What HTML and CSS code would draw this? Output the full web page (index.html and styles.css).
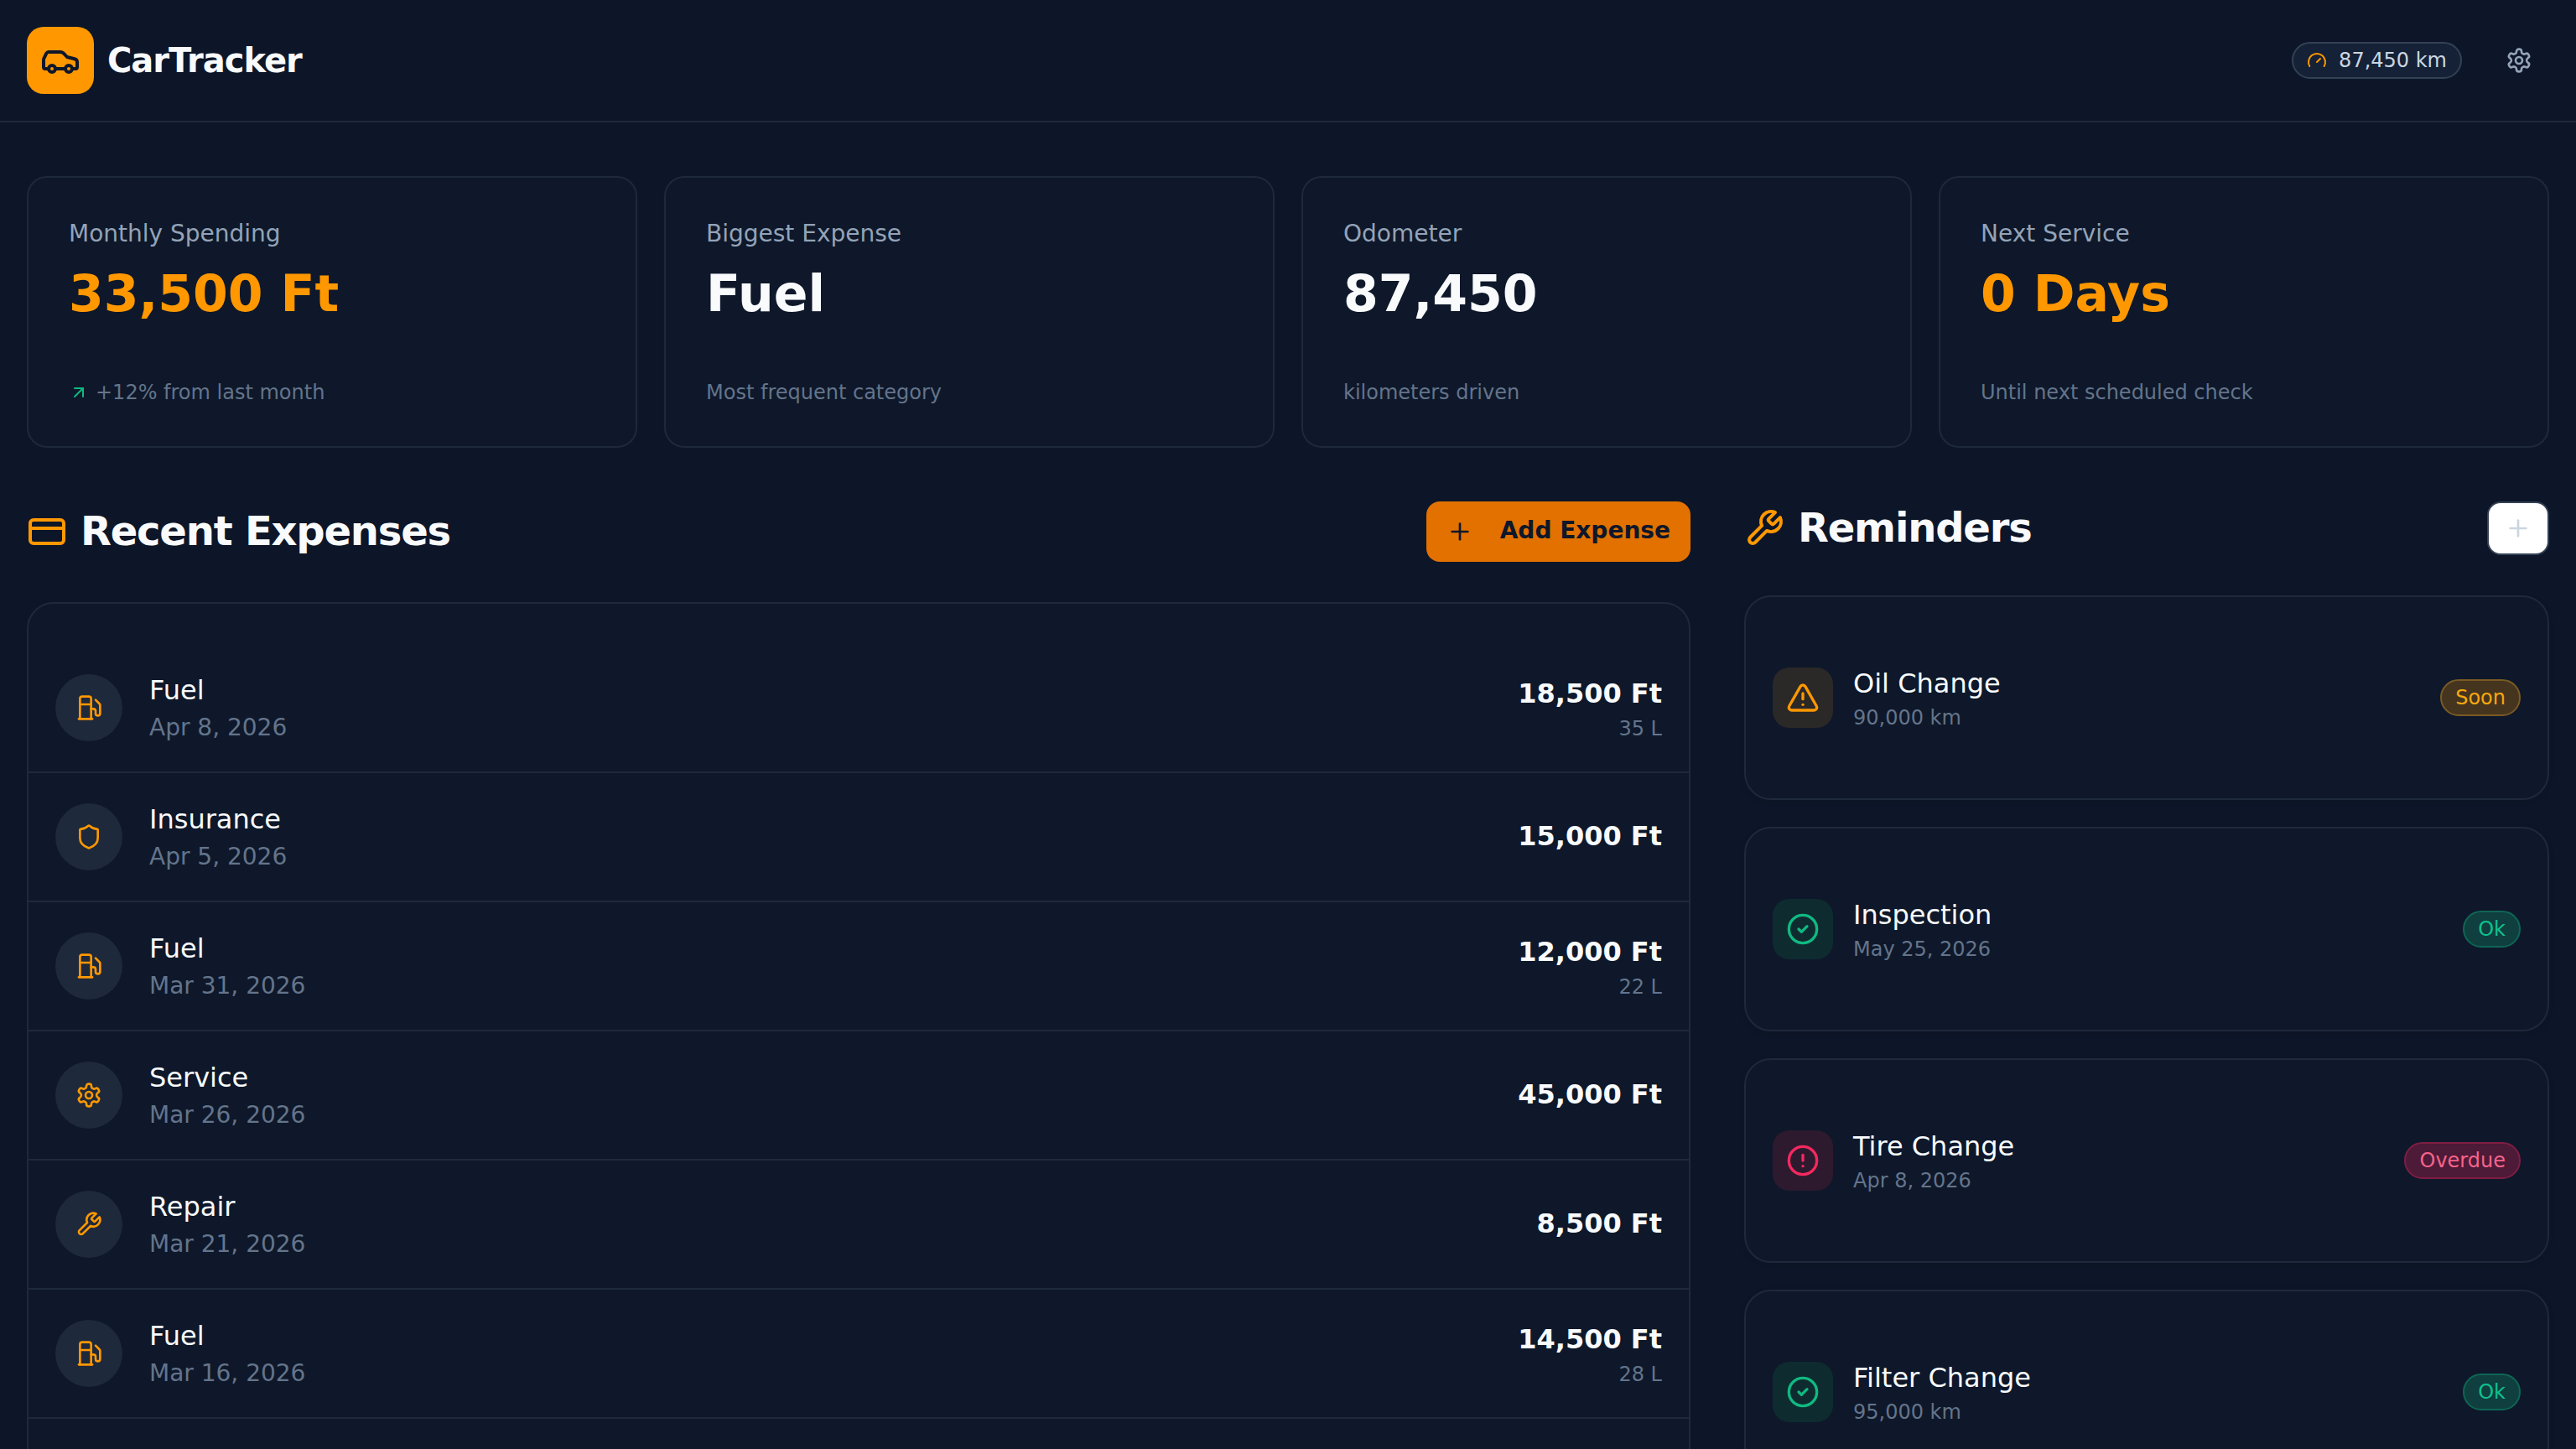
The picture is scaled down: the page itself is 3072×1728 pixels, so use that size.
FILE: index.html
```html
<!DOCTYPE html>
<html lang="en">
<head>
  <meta charset="UTF-8" />
  <meta name="viewport" content="width=device-width, initial-scale=1" />
  <title>CarTracker</title>
  <link rel="stylesheet" href="styles.css">
</head>
<body>

  <svg class="sprite" xmlns="http://www.w3.org/2000/svg">
    <symbol id="i-car" viewBox="0 0 24 24"><path d="M19 17h2c.6 0 1-.4 1-1v-3c0-.9-.7-1.7-1.5-1.9C18.7 10.6 16 10 16 10s-1.3-1.4-2.2-2.3c-.5-.4-1.1-.7-1.8-.7H5c-.6 0-1.1.4-1.4.9l-1.4 2.9A3.7 3.7 0 0 0 2 12v4c0 .6.4 1 1 1h2"/><circle cx="7" cy="17" r="2"/><path d="M9 17h6"/><circle cx="17" cy="17" r="2"/></symbol>
    <symbol id="i-gauge" viewBox="0 0 24 24"><path d="m12 14 4-4"/><path d="M3.34 19a10 10 0 1 1 17.32 0"/></symbol>
    <symbol id="i-gear" viewBox="0 0 24 24"><path d="M12.22 2h-.44a2 2 0 0 0-2 2v.18a2 2 0 0 1-1 1.73l-.43.25a2 2 0 0 1-2 0l-.15-.08a2 2 0 0 0-2.73.73l-.22.38a2 2 0 0 0 .73 2.73l.15.1a2 2 0 0 1 1 1.72v.51a2 2 0 0 1-1 1.74l-.15.09a2 2 0 0 0-.73 2.73l.22.38a2 2 0 0 0 2.73.73l.15-.08a2 2 0 0 1 2 0l.43.25a2 2 0 0 1 1 1.73V20a2 2 0 0 0 2 2h.44a2 2 0 0 0 2-2v-.18a2 2 0 0 1 1-1.73l.43-.25a2 2 0 0 1 2 0l.15.08a2 2 0 0 0 2.73-.73l.22-.39a2 2 0 0 0-.73-2.73l-.15-.08a2 2 0 0 1-1-1.74v-.5a2 2 0 0 1 1-1.74l.15-.09a2 2 0 0 0 .73-2.73l-.22-.38a2 2 0 0 0-2.73-.73l-.15.08a2 2 0 0 1-2 0l-.43-.25a2 2 0 0 1-1-1.73V4a2 2 0 0 0-2-2z"/><circle cx="12" cy="12" r="3"/></symbol>
    <symbol id="i-card" viewBox="0 0 24 24"><rect width="20" height="14" x="2" y="5" rx="2"/><path d="M2 10h20"/></symbol>
    <symbol id="i-fuel" viewBox="0 0 24 24"><path d="M3 22h12"/><path d="M4 9h10"/><path d="M14 22V4a2 2 0 0 0-2-2H6a2 2 0 0 0-2 2v18"/><path d="M14 13h2a2 2 0 0 1 2 2v2a2 2 0 0 0 2 2a2 2 0 0 0 2-2V9.83a2 2 0 0 0-.59-1.42L18 5"/></symbol>
    <symbol id="i-shield" viewBox="0 0 24 24"><path d="M20 13c0 5-3.5 7.5-7.66 8.95a1 1 0 0 1-.67-.01C7.5 20.5 4 18 4 13V6a1 1 0 0 1 1-1c2 0 4.5-1.2 6.24-2.72a1.17 1.17 0 0 1 1.52 0C14.51 3.81 17 5 19 5a1 1 0 0 1 1 1z"/></symbol>
    <symbol id="i-wrench" viewBox="0 0 24 24"><path d="M14.7 6.3a1 1 0 0 0 0 1.4l1.6 1.6a1 1 0 0 0 1.4 0l3.77-3.77a6 6 0 0 1-7.94 7.94l-6.91 6.91a2.12 2.12 0 0 1-3-3l6.91-6.91a6 6 0 0 1 7.94-7.94l-3.76 3.76z"/></symbol>
    <symbol id="i-warn" viewBox="0 0 24 24"><path d="m21.73 18-8-14a2 2 0 0 0-3.48 0l-8 14A2 2 0 0 0 4 21h16a2 2 0 0 0 1.73-3"/><path d="M12 9v4"/><path d="M12 17h.01"/></symbol>
    <symbol id="i-check" viewBox="0 0 24 24"><circle cx="12" cy="12" r="10"/><path d="m9 12 2 2 4-4"/></symbol>
    <symbol id="i-alert" viewBox="0 0 24 24"><circle cx="12" cy="12" r="10"/><path d="M12 8v4"/><path d="M12 16h.01"/></symbol>
    <symbol id="i-plus" viewBox="0 0 24 24"><path d="M5 12h14"/><path d="M12 5v14"/></symbol>
    <symbol id="i-up" viewBox="0 0 24 24"><path d="M7 7h10v10"/><path d="M7 17 17 7"/></symbol>
  </svg>

  <header class="topbar">
    <div class="brand">
      <span class="brand-logo"><svg class="icon icon-48"><use href="#i-car"/></svg></span>
      <span class="brand-name">CarTracker</span>
    </div>
    <div class="topbar-right">
      <div class="odo-pill">
        <svg class="icon icon-24 orange"><use href="#i-gauge"/></svg>
        <span>87,450 km</span>
      </div>
      <button class="gear-btn"><svg class="icon icon-32"><use href="#i-gear"/></svg></button>
    </div>
  </header>

  <main class="page">
    <section class="stats">
      <div class="stat-card">
        <div class="stat-label">Monthly Spending</div>
        <div class="stat-value orange">33,500 Ft</div>
        <div class="stat-note"><svg class="icon icon-24 green"><use href="#i-up"/></svg>+12% from last month</div>
      </div>
      <div class="stat-card">
        <div class="stat-label">Biggest Expense</div>
        <div class="stat-value">Fuel</div>
        <div class="stat-note">Most frequent category</div>
      </div>
      <div class="stat-card">
        <div class="stat-label">Odometer</div>
        <div class="stat-value">87,450</div>
        <div class="stat-note">kilometers driven</div>
      </div>
      <div class="stat-card">
        <div class="stat-label">Next Service</div>
        <div class="stat-value orange">0 Days</div>
        <div class="stat-note">Until next scheduled check</div>
      </div>
    </section>

    <section class="columns">
      <div class="col-left">
        <div class="section-head head-expenses">
          <h2 class="section-title"><svg class="icon icon-48 orange"><use href="#i-card"/></svg><span class="title-text">Recent Expenses</span></h2>
          <button class="add-btn"><svg class="icon icon-32"><use href="#i-plus"/></svg><span class="add-text">Add Expense</span></button>
        </div>
        <div class="expense-list">
          <div class="expense-row">
            <span class="expense-icon"><svg class="icon icon-32 orange"><use href="#i-fuel"/></svg></span>
            <div class="expense-info"><div class="expense-name">Fuel</div><div class="expense-date">Apr 8, 2026</div></div>
            <div class="expense-amount"><div class="amount">18,500 Ft</div><div class="liters">35 L</div></div>
          </div>
          <div class="expense-row">
            <span class="expense-icon"><svg class="icon icon-32 orange"><use href="#i-shield"/></svg></span>
            <div class="expense-info"><div class="expense-name">Insurance</div><div class="expense-date">Apr 5, 2026</div></div>
            <div class="expense-amount"><div class="amount">15,000 Ft</div></div>
          </div>
          <div class="expense-row">
            <span class="expense-icon"><svg class="icon icon-32 orange"><use href="#i-fuel"/></svg></span>
            <div class="expense-info"><div class="expense-name">Fuel</div><div class="expense-date">Mar 31, 2026</div></div>
            <div class="expense-amount"><div class="amount">12,000 Ft</div><div class="liters">22 L</div></div>
          </div>
          <div class="expense-row">
            <span class="expense-icon"><svg class="icon icon-32 orange"><use href="#i-gear"/></svg></span>
            <div class="expense-info"><div class="expense-name">Service</div><div class="expense-date">Mar 26, 2026</div></div>
            <div class="expense-amount"><div class="amount">45,000 Ft</div></div>
          </div>
          <div class="expense-row">
            <span class="expense-icon"><svg class="icon icon-32 orange"><use href="#i-wrench"/></svg></span>
            <div class="expense-info"><div class="expense-name">Repair</div><div class="expense-date">Mar 21, 2026</div></div>
            <div class="expense-amount"><div class="amount">8,500 Ft</div></div>
          </div>
          <div class="expense-row">
            <span class="expense-icon"><svg class="icon icon-32 orange"><use href="#i-fuel"/></svg></span>
            <div class="expense-info"><div class="expense-name">Fuel</div><div class="expense-date">Mar 16, 2026</div></div>
            <div class="expense-amount"><div class="amount">14,500 Ft</div><div class="liters">28 L</div></div>
          </div>
        </div>
      </div>

      <div class="col-right">
        <div class="section-head head-reminders">
          <h2 class="section-title"><svg class="icon icon-48 orange"><use href="#i-wrench"/></svg><span class="title-text">Reminders</span></h2>
          <button class="plus-btn"><svg class="icon icon-32"><use href="#i-plus"/></svg></button>
        </div>
        <div class="reminder-list">
          <div class="reminder-card">
            <span class="reminder-icon warn"><svg class="icon icon-40"><use href="#i-warn"/></svg></span>
            <div class="reminder-info"><div class="reminder-name">Oil Change</div><div class="reminder-due">90,000 km</div></div>
            <span class="badge warn-badge">Soon</span>
          </div>
          <div class="reminder-card">
            <span class="reminder-icon ok"><svg class="icon icon-40"><use href="#i-check"/></svg></span>
            <div class="reminder-info"><div class="reminder-name">Inspection</div><div class="reminder-due">May 25, 2026</div></div>
            <span class="badge ok-badge">Ok</span>
          </div>
          <div class="reminder-card">
            <span class="reminder-icon late"><svg class="icon icon-40"><use href="#i-alert"/></svg></span>
            <div class="reminder-info"><div class="reminder-name">Tire Change</div><div class="reminder-due">Apr 8, 2026</div></div>
            <span class="badge late-badge">Overdue</span>
          </div>
          <div class="reminder-card">
            <span class="reminder-icon ok"><svg class="icon icon-40"><use href="#i-check"/></svg></span>
            <div class="reminder-info"><div class="reminder-name">Filter Change</div><div class="reminder-due">95,000 km</div></div>
            <span class="badge ok-badge">Ok</span>
          </div>
        </div>
      </div>
    </section>
  </main>

</body>
</html>
```

FILE: styles.css
```css
* {
  box-sizing: border-box;
}
html, body {
  height: 100%;
  overflow: hidden;
}
body {
  margin: 0;
  background-color: #0d1628;
  color: #f8fafc;
  font-family: "DejaVu Sans", sans-serif;
}
button {
  font-family: inherit;
  cursor: pointer;
}
.sprite {
  display: none;
}
.icon {
  display: block;
  flex: none;
  fill: none;
  stroke: currentColor;
  stroke-width: 2;
  stroke-linecap: round;
  stroke-linejoin: round;
}
.icon-24 { width: 24px; height: 24px; }
.icon-32 { width: 32px; height: 32px; }
.icon-40 { width: 40px; height: 40px; }
.icon-48 { width: 48px; height: 48px; }
.orange { color: #ff9800; }
.green { color: #10b981; }

.topbar {
  display: flex;
  align-items: center;
  justify-content: space-between;
  height: 146px;
  padding: 0 32px;
  border-bottom: 2px solid #1e293b;
}
.brand {
  display: flex;
  align-items: center;
  gap: 16px;
}
.brand-logo {
  display: flex;
  align-items: center;
  justify-content: center;
  width: 80px;
  height: 80px;
  border-radius: 20px;
  background-color: #ff9800;
  color: #0f172a;
}
.brand-name {
  font-size: 40px;
  font-weight: 700;
  letter-spacing: -1px;
}
.topbar-right {
  display: flex;
  align-items: center;
  gap: 32px;
}
.odo-pill {
  display: flex;
  align-items: center;
  gap: 14px;
  height: 44px;
  padding: 0 16px;
  border: 2px solid #334155;
  border-radius: 22px;
  background-color: #152136;
  color: #cbd5e1;
  font-size: 24px;
}
.gear-btn {
  display: flex;
  align-items: center;
  justify-content: center;
  width: 72px;
  height: 72px;
  padding: 0;
  border: none;
  background: none;
  color: #94a3b8;
}

.page {
  padding: 64px 32px 0;
}
.stats {
  display: grid;
  grid-template-columns: repeat(4, 1fr);
  gap: 32px;
  margin-bottom: 64px;
}
.stat-card {
  display: flex;
  flex-direction: column;
  height: 324px;
  padding: 48px;
  border: 2px solid #1e293b;
  border-radius: 24px;
  background-color: #0e182a;
}
.stat-label {
  color: #94a3b8;
  font-size: 28px;
  line-height: 38px;
}
.stat-value {
  margin-top: 16px;
  font-size: 60px;
  font-weight: 700;
  line-height: 72px;
}
.stat-note {
  display: flex;
  align-items: center;
  gap: 8px;
  margin-top: auto;
  margin-bottom: -2px;
  color: #64748b;
  font-size: 24px;
  line-height: 36px;
}

.columns {
  display: grid;
  grid-template-columns: minmax(0, 1fr) 960px;
  gap: 64px;
}
.col-left {
  display: flex;
  flex-direction: column;
}
.section-head {
  display: flex;
  align-items: center;
  justify-content: space-between;
}
.head-expenses {
  height: 72px;
  margin-bottom: 48px;
}
.head-reminders {
  height: 64px;
  margin-bottom: 48px;
}
.section-title {
  display: flex;
  align-items: center;
  gap: 16px;
  margin: 0;
  font-size: 48px;
  font-weight: 700;
  letter-spacing: -1.2px;
}
.title-text {
  margin-bottom: 3px;
}
.add-btn {
  display: flex;
  align-items: center;
  gap: 32px;
  height: 72px;
  padding: 0 24px;
  border: none;
  border-radius: 16px;
  background-color: #e27100;
  color: #0f172a;
  font-size: 28px;
  font-weight: 700;
}
.add-text {
  margin-bottom: 3px;
}
.plus-btn {
  display: flex;
  align-items: center;
  justify-content: center;
  width: 74px;
  height: 64px;
  padding: 0;
  border: 2px solid #334155;
  border-radius: 16px;
  background-color: #fff;
  color: #cbd5e1;
}

.expense-list {
  flex: 1;
  padding: 48px 0;
  border: 2px solid #1e293b;
  border-radius: 32px;
  background-color: #0e182a;
}
.expense-row {
  display: flex;
  align-items: center;
  gap: 32px;
  height: 154px;
  padding: 0 32px;
  border-bottom: 2px solid #1e293b;
}
.expense-icon {
  display: flex;
  align-items: center;
  justify-content: center;
  width: 80px;
  height: 80px;
  border-radius: 50%;
  background-color: #1e293b;
}
.expense-info {
  flex: 1;
}
.expense-name {
  font-size: 32px;
  line-height: 48px;
}
.expense-date {
  color: #64748b;
  font-size: 28px;
  line-height: 42px;
}
.expense-amount {
  text-align: right;
}
.amount {
  font-size: 32px;
  font-weight: 700;
  line-height: 50px;
}
.amount:only-child {
  margin-bottom: 3px;
}
.liters {
  color: #64748b;
  font-size: 24px;
  line-height: 34px;
}

.reminder-list {
  display: flex;
  flex-direction: column;
  gap: 32px;
}
.reminder-card {
  display: flex;
  align-items: center;
  gap: 24px;
  height: 244px;
  padding: 0 32px;
  border: 2px solid #1e293b;
  border-radius: 32px;
  background-color: #0e182a;
  box-shadow: 0 2px 6px rgba(0, 0, 0, 0.12);
}
.reminder-icon {
  display: flex;
  align-items: center;
  justify-content: center;
  width: 72px;
  height: 72px;
  border-radius: 20px;
}
.reminder-icon.warn { background-color: #2b2828; color: #ff9800; }
.reminder-icon.ok { background-color: #0e2c30; color: #10b981; }
.reminder-icon.late { background-color: #2e1a2e; color: #f4295f; }
.reminder-info {
  flex: 1;
  padding-top: 2px;
}
.reminder-name {
  font-size: 32px;
  line-height: 46px;
}
.reminder-due {
  color: #64748b;
  font-size: 24px;
  line-height: 36px;
}
.badge {
  height: 44px;
  padding: 0 16px;
  border: 2px solid;
  border-radius: 22px;
  font-size: 24px;
  line-height: 40px;
}
.warn-badge { border-color: #7a5a23; background-color: #45351f; color: #f5a70f; }
.ok-badge { border-color: #0f6655; background-color: #0f3f3f; color: #10c08c; }
.late-badge { border-color: #7f1d42; background-color: #4d1a38; color: #f4648a; }
```
